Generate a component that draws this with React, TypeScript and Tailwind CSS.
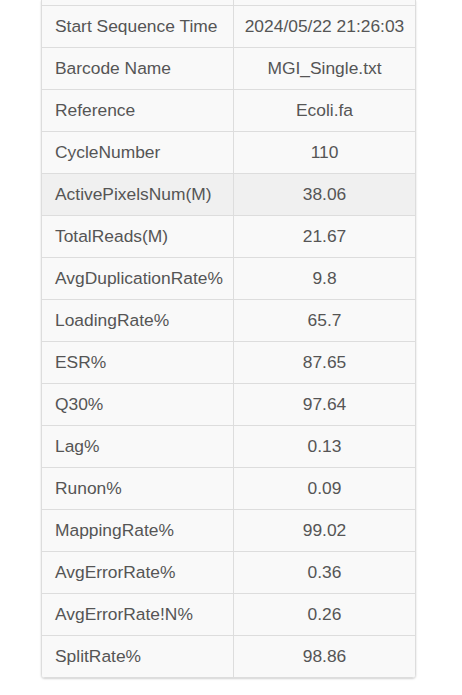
const rows: [string, string][] = [
  ['Start Sequence Time', '2024/05/22 21:26:03'],
  ['Barcode Name', 'MGI_Single.txt'],
  ['Reference', 'Ecoli.fa'],
  ['CycleNumber', '110'],
  ['ActivePixelsNum(M)', '38.06'],
  ['TotalReads(M)', '21.67'],
  ['AvgDuplicationRate%', '9.8'],
  ['LoadingRate%', '65.7'],
  ['ESR%', '87.65'],
  ['Q30%', '97.64'],
  ['Lag%', '0.13'],
  ['Runon%', '0.09'],
  ['MappingRate%', '99.02'],
  ['AvgErrorRate%', '0.36'],
  ['AvgErrorRate!N%', '0.26'],
  ['SplitRate%', '98.86'],
];

export default function App() {
  return (
    <div className="w-[462px] h-[695px] bg-white overflow-hidden">
      <div className="ml-[41px] w-[375px] border-x border-[#dddddd] rounded-b-[4px] shadow-[0_1px_2px_rgba(0,0,0,0.18)] overflow-hidden font-['Liberation_Sans',Arial,sans-serif] text-[17.4px] text-[#555555]">
        {/* row above, scrolled mostly out of view */}
        <div className="flex h-[6px] bg-[#f9f9f9] border-b border-[#dddddd]">
          <div className="w-[192px] border-r border-[#dddddd]" />
          <div className="flex-1" />
        </div>
        {rows.map(([k, v], i) => (
          <div
            key={k}
            className={`flex h-[42px] items-center border-b border-[#dddddd] ${i === 4 ? 'bg-[#f0f0f0]' : 'bg-[#f9f9f9]'}`}
          >
            <div className="w-[192px] h-full flex items-center pl-[13px] border-r border-[#dddddd]">{k}</div>
            <div className="flex-1 h-full flex items-center justify-center">{v}</div>
          </div>
        ))}
      </div>
    </div>
  );
}
